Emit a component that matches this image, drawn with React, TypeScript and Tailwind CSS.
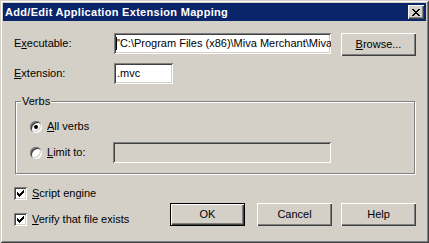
import React from 'react';

const raised =
  'bg-[#d4d0c8] shadow-[inset_1px_1px_0_#fff,inset_-1px_-1px_0_#404040,inset_-2px_-2px_0_#808080]';
const sunken =
  'shadow-[inset_1px_1px_0_#808080,inset_-1px_-1px_0_#fff,inset_2px_2px_0_#404040,inset_-2px_-2px_0_#d4d0c8]';

function CloseGlyph() {
  const rows = [0, 1, 2, 3, 4, 5, 6];
  return (
    <svg width="8" height="7" viewBox="0 0 8 7" shapeRendering="crispEdges">
      {rows.map((i) => {
        const k = i <= 3 ? i : 6 - i;
        return (
          <g key={i}>
            <rect x={k} y={i} width="2" height="1" fill="#000" />
            <rect x={6 - k} y={i} width="2" height="1" fill="#000" />
          </g>
        );
      })}
    </svg>
  );
}

function Check() {
  // classic 7-column check, each column 3px tall
  const cols = [5, 6, 7, 6, 5, 4, 3];
  return (
    <svg width="13" height="13" viewBox="0 0 13 13" shapeRendering="crispEdges" className="absolute inset-0">
      {cols.map((y, i) => (
        <rect key={i} x={3 + i} y={y} width="1" height="3" fill="#000" />
      ))}
    </svg>
  );
}

function Checkbox({ children }: { children: React.ReactNode }) {
  return (
    <div className="h-[13px] flex items-center gap-[5px]">
      <div className={`relative w-[13px] h-[13px] bg-white ${sunken}`}>
        <Check />
      </div>
      <span className="leading-[13px]">{children}</span>
    </div>
  );
}

function Radio({ checked }: { checked?: boolean }) {
  return (
    <div className={`w-[12px] h-[12px] rounded-full bg-white flex items-center justify-center ${sunken}`}>
      {checked && <div className="w-[4px] h-[4px] rounded-full bg-black" />}
    </div>
  );
}

function Button({ children, isDefault }: { children: React.ReactNode; isDefault?: boolean }) {
  if (isDefault) {
    return (
      <div className="w-[75px] h-[23px] border border-black">
        <div className={`w-full h-full flex items-center justify-center ${raised}`}>{children}</div>
      </div>
    );
  }
  return <div className={`w-[75px] h-[23px] flex items-center justify-center ${raised}`}>{children}</div>;
}

export default function App() {
  return (
    <div className="w-[429px] h-[243px] bg-[#d4d0c8] p-[3px] flex flex-col text-[11px] text-black font-['Liberation_Sans',Arial,sans-serif] shadow-[inset_1px_1px_0_#d4d0c8,inset_-1px_-1px_0_#404040,inset_2px_2px_0_#fff,inset_-2px_-2px_0_#808080]">
      {/* Title bar */}
      <div className="h-[18px] bg-[#0a246a] flex items-center pl-[2px] pr-[2px]">
        <span className="text-white font-bold tracking-[0.3px] leading-none">Add/Edit Application Extension Mapping</span>
        <div className={`ml-auto w-[16px] h-[14px] flex items-center justify-center ${raised}`}>
          <CloseGlyph />
        </div>
      </div>

      <div className="flex flex-col pl-[11px] pr-[10px]">
        {/* Executable */}
        <div className="flex items-start mt-[12px]">
          <div className="w-[100px] h-[21px] flex items-center">
            E<u className="underline-offset-[1px]">x</u>ecutable:
          </div>
          <div className={`relative w-[217px] h-[21px] bg-white overflow-hidden flex items-center pl-[2px] whitespace-nowrap ${sunken}`}>
            <span className="w-px h-[13px] bg-black shrink-0" />
            <span className="-ml-px">"C:\Program Files (x86)\Miva Merchant\Miva Merchant 5\</span>
          </div>
          <div className="ml-[10px]">
            <Button>
              <span>
                <u className="underline-offset-[1px]">B</u>rowse...
              </span>
            </Button>
          </div>
        </div>

        {/* Extension */}
        <div className="flex items-center mt-[7px]">
          <div className="w-[100px] h-[21px] flex items-center">
            <u className="underline-offset-[1px]">E</u>xtension:
          </div>
          <div className={`w-[59px] h-[21px] bg-white flex items-center pl-[3px] ${sunken}`}>.mvc</div>
        </div>

        {/* Verbs group */}
        <div className="relative mt-[17px] ml-[1px] w-[400px] h-[73px] border border-[#808080] shadow-[inset_1px_1px_0_#fff,1px_1px_0_#fff] pl-[14px] pt-[18px]">
          <span className="absolute left-[5px] top-[-7px] px-[1px] bg-[#d4d0c8] leading-[13px]">Verbs</span>
          <div className="h-[13px] flex items-center gap-[5px]">
            <Radio checked />
            <span>
              <u className="underline-offset-[1px]">A</u>ll verbs
            </span>
          </div>
          <div className="flex items-center mt-[9px]">
            <div className="w-[83px] h-[21px] flex items-center gap-[5px]">
              <Radio />
              <span>
                <u className="underline-offset-[1px]">L</u>imit to:
              </span>
            </div>
            <div className={`w-[218px] h-[21px] bg-[#d4d0c8] ${sunken}`} />
          </div>
        </div>

        {/* Bottom */}
        <div className="flex items-end mt-[13px]">
          <div className="flex flex-col gap-[13px]">
            <Checkbox>
              <u className="underline-offset-[1px]">S</u>cript engine
            </Checkbox>
            <Checkbox>
              <u className="underline-offset-[1px]">V</u>erify that file exists
            </Checkbox>
          </div>
          <div className="ml-auto flex">
            <Button isDefault>OK</Button>
            <div className="ml-[12px]">
              <Button>Cancel</Button>
            </div>
            <div className="ml-[9px]">
              <Button>Help</Button>
            </div>
          </div>
        </div>
      </div>
    </div>
  );
}
